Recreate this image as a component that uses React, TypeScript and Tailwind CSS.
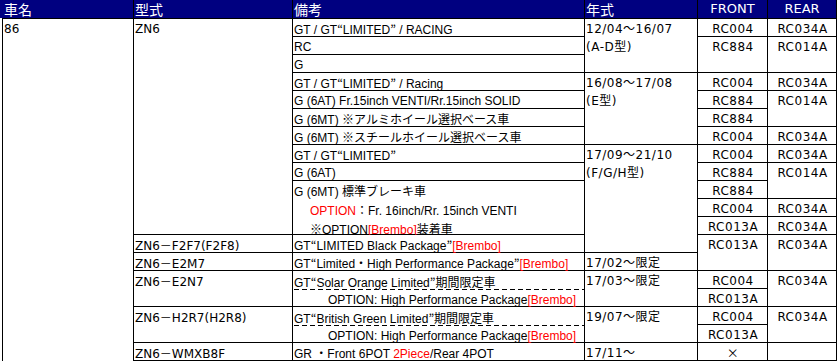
import React from 'react'
import clsx from 'clsx'

// 赤字
const R = ({ children }: { children: React.ReactNode }) => (
  <span className="text-[#ff0000]">{children}</span>
)

// 全角記号は CJK フォントで
const J = ({ children }: { children: React.ReactNode }) => (
  <span className="font-['Noto_Sans_CJK_JP',sans-serif]">{children}</span>
)

const Cell = ({ className, children }: { className?: string; children?: React.ReactNode }) => (
  <div className={clsx('bg-white whitespace-nowrap pl-px pt-px leading-[18px]', className)}>
    {children}
  </div>
)

// 備考欄 (Arial 幅)
const Note = ({ className, children }: { className?: string; children?: React.ReactNode }) => (
  <Cell className={clsx("col-start-3 font-['Liberation_Sans','Noto_Sans_CJK_JP',sans-serif]", className)}>
    {children}
  </Cell>
)

// FRONT / REAR
const Part = ({ className, children }: { className?: string; children?: React.ReactNode }) => (
  <Cell className={clsx('text-center pl-0 tracking-[0.5px]', className)}>{children}</Cell>
)

const Head = ({ className, children }: { className?: string; children: React.ReactNode }) => (
  <div className={clsx('bg-[#000080] text-white leading-[18px] whitespace-nowrap', className)}>{children}</div>
)

const Dash = () => (
  <div className="h-px bg-[image:repeating-linear-gradient(90deg,#000_0_5px,transparent_5px_8px)]" />
)

export default function App() {
  return (
    <div className="bg-white w-[837px] h-[361px] pl-[2px]">
      <div className="grid grid-cols-[130px_158px_291px_112px_69px_68px] grid-rows-[18px_repeat(19,17px)] gap-px bg-black px-px pb-px w-[835px] text-[12px] text-black font-['DejaVu_Sans','Noto_Sans_CJK_JP',sans-serif]">
        {/* ヘッダー */}
        <Head className="-ml-[3px] pl-[4px] text-[14px] font-['Noto_Sans_CJK_JP',sans-serif]">車名</Head>
        <Head className="pl-px text-[14px] font-['Noto_Sans_CJK_JP',sans-serif]">型式</Head>
        <Head className="pl-px text-[14px] font-['Noto_Sans_CJK_JP',sans-serif]">備考</Head>
        <Head className="pl-px text-[14px] font-['Noto_Sans_CJK_JP',sans-serif]">年式</Head>
        <Head className="text-center text-[13px]">FRONT</Head>
        <Head className="text-center text-[13px]">REAR</Head>

        {/* 車名 */}
        <Cell className="col-start-1 row-start-2 row-span-19 -mb-px">86</Cell>

        {/* 型式 */}
        <Cell className="col-start-2 row-start-2 row-span-12">ZN6</Cell>
        <Cell className="col-start-2 row-start-14">ZN6<J>－</J>F2F7(F2F8)</Cell>
        <Cell className="col-start-2 row-start-15">ZN6<J>－</J>E2M7</Cell>
        <Cell className="col-start-2 row-start-16 row-span-2">ZN6<J>－</J>E2N7</Cell>
        <Cell className="col-start-2 row-start-18 row-span-2">ZN6<J>－</J>H2R7(H2R8)</Cell>
        <Cell className="col-start-2 row-start-20">ZN6<J>－</J>WMXB8F</Cell>

        {/* 備考 */}
        <Note className="row-start-2">GT / GT<J>“</J>LIMITED<J>”</J> / RACING</Note>
        <Note className="row-start-3">RC</Note>
        <Note className="row-start-4">G</Note>
        <Note className="row-start-5">GT / GT<J>“</J>LIMITED<J>”</J> / Racing</Note>
        <Note className="row-start-6">G (6AT) Fr.15inch VENTI/Rr.15inch SOLID</Note>
        <Note className="row-start-7">G (6MT) <J>※アルミホイール選択ベース車</J></Note>
        <Note className="row-start-8">G (6MT) <J>※スチールホイール選択ベース車</J></Note>
        <Note className="row-start-9">GT / GT<J>“</J>LIMITED<J>”</J></Note>
        <Note className="row-start-10">G (6AT)</Note>
        <Note className="row-start-11 row-span-3">
          <div>G (6MT) <J>標準ブレーキ車</J></div>
          <div className="pl-[16px]"><R>OPTION</R><J>：</J>Fr. 16inch/Rr. 15inch VENTI</div>
          <div className="pl-[16px]"><J>※</J>OPTION<R>[Brembo]</R><J>装着車</J></div>
        </Note>
        <Note className="row-start-14">GT<J>“</J>LIMITED Black Package<J>”</J><R>[Brembo]</R></Note>
        <Note className="row-start-15">GT<J>“</J>Limited<J>・</J>High Performance Package<J>”</J><R>[Brembo]</R></Note>
        <Note className="row-start-16 row-span-2 pt-0">
          <div className="h-[17px] pt-px">GT<J>“</J>Solar Orange Limited<J>”期間限定車</J></div>
          <Dash />
          <div className="h-[17px] pt-px pl-[34px]">OPTION: High Performance Package<R>[Brembo]</R></div>
        </Note>
        <Note className="row-start-18 row-span-2 pt-0">
          <div className="h-[17px] pt-px">GT<J>“</J>British Green Limited<J>”期間限定車</J></div>
          <Dash />
          <div className="h-[17px] pt-px pl-[34px]">OPTION: High Performance Package<R>[Brembo]</R></div>
        </Note>
        <Note className="row-start-20">GR <J>・</J>Front 6POT <R>2Piece</R>/Rear 4POT</Note>

        {/* 年式 */}
        <Cell className="col-start-4 row-start-2 row-span-3 tracking-[0.5px]">12/04～16/07<br />(A-D型)</Cell>
        <Cell className="col-start-4 row-start-5 row-span-4 tracking-[0.5px]">16/08～17/08<br />(E型)</Cell>
        <Cell className="col-start-4 row-start-9 row-span-6 tracking-[0.5px]">17/09～21/10<br />(F/G/H型)</Cell>
        <Cell className="col-start-4 row-start-15 tracking-[0.5px]">17/02～限定</Cell>
        <Cell className="col-start-4 row-start-16 row-span-2 tracking-[0.5px]">17/03～限定</Cell>
        <Cell className="col-start-4 row-start-18 row-span-2 tracking-[0.5px]">19/07～限定</Cell>
        <Cell className="col-start-4 row-start-20 tracking-[0.5px]">17/11～</Cell>

        {/* FRONT */}
        <Part className="col-start-5 row-start-2">RC004</Part>
        <Part className="col-start-5 row-start-3 row-span-2 pt-[10px]">RC884</Part>
        <Part className="col-start-5 row-start-5">RC004</Part>
        <Part className="col-start-5 row-start-6">RC884</Part>
        <Part className="col-start-5 row-start-7">RC884</Part>
        <Part className="col-start-5 row-start-8">RC004</Part>
        <Part className="col-start-5 row-start-9">RC004</Part>
        <Part className="col-start-5 row-start-10">RC884</Part>
        <Part className="col-start-5 row-start-11">RC884</Part>
        <Part className="col-start-5 row-start-12">RC004</Part>
        <Part className="col-start-5 row-start-13">RC013A</Part>
        <Part className="col-start-5 row-start-14 row-span-2 pt-[10px]">RC013A</Part>
        <Part className="col-start-5 row-start-16">RC004</Part>
        <Part className="col-start-5 row-start-17">RC013A</Part>
        <Part className="col-start-5 row-start-18">RC004</Part>
        <Part className="col-start-5 row-start-19">RC013A</Part>
        <Part className="col-start-5 row-start-20"><J>×</J></Part>

        {/* REAR */}
        <Part className="col-start-6 row-start-2">RC034A</Part>
        <Part className="col-start-6 row-start-3 row-span-2 pt-[10px]">RC014A</Part>
        <Part className="col-start-6 row-start-5">RC034A</Part>
        <Part className="col-start-6 row-start-6 row-span-2 pt-[10px]">RC014A</Part>
        <Part className="col-start-6 row-start-8">RC034A</Part>
        <Part className="col-start-6 row-start-9">RC034A</Part>
        <Part className="col-start-6 row-start-10 row-span-2 pt-[10px]">RC014A</Part>
        <Part className="col-start-6 row-start-12">RC034A</Part>
        <Part className="col-start-6 row-start-13">RC034A</Part>
        <Part className="col-start-6 row-start-14 row-span-2 pt-[10px]">RC034A</Part>
        <Part className="col-start-6 row-start-16 row-span-2 pt-[10px]">RC034A</Part>
        <Part className="col-start-6 row-start-18 row-span-2 pt-[10px]">RC034A</Part>
        <Part className="col-start-6 row-start-20" />
      </div>
    </div>
  )
}
